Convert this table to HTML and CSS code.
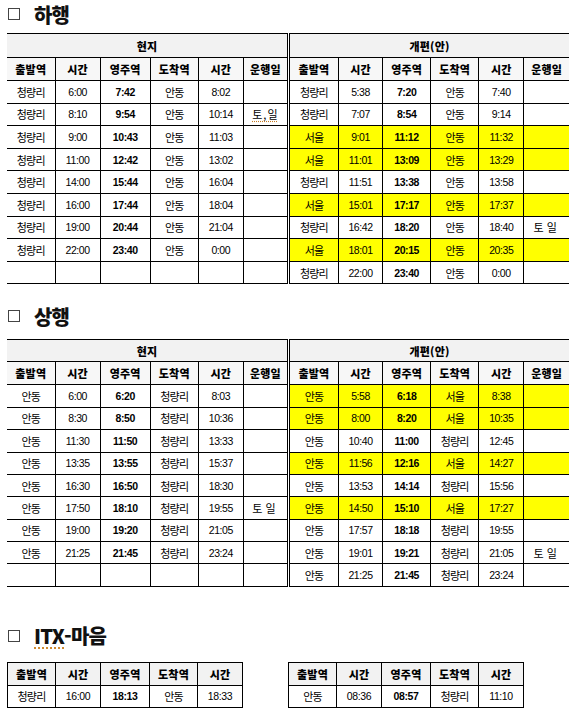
FILE: index.html
```html
<!DOCTYPE html>
<html lang="ko">
<head>
<meta charset="utf-8">
<link rel="stylesheet" href="styles.css">
</head>
<body>
<h2 class="title title-down"><span class="box"></span>하행</h2>
<table class="tt tt-down">
<colgroup><col class="c1"><col class="c2"><col class="c3"><col class="c4"><col class="c5"><col class="c6"><col class="c7"><col class="c8"><col class="c9"><col class="c10"><col class="c11"><col class="c12"></colgroup>
<tr class="h1"><th colspan="6">현지</th><th colspan="6" class="split">개편(안)</th></tr>
<tr class="h2"><th>출발역</th><th>시간</th><th>영주역</th><th>도착역</th><th>시간</th><th>운행일</th><th class="split">출발역</th><th>시간</th><th>영주역</th><th>도착역</th><th>시간</th><th>운행일</th></tr>
<tr><td>청량리</td><td>6:00</td><td>7:42</td><td>안동</td><td>8:02</td><td></td><td class="split">청량리</td><td>5:38</td><td>7:20</td><td>안동</td><td>7:40</td><td></td></tr>
<tr><td>청량리</td><td>8:10</td><td>9:54</td><td>안동</td><td>10:14</td><td><span class="spell">토,일</span></td><td class="split">청량리</td><td>7:07</td><td>8:54</td><td>안동</td><td>9:14</td><td></td></tr>
<tr class="hl"><td>청량리</td><td>9:00</td><td>10:43</td><td>안동</td><td>11:03</td><td></td><td class="split">서울</td><td>9:01</td><td>11:12</td><td>안동</td><td>11:32</td><td></td></tr>
<tr class="hl"><td>청량리</td><td>11:00</td><td>12:42</td><td>안동</td><td>13:02</td><td></td><td class="split">서울</td><td>11:01</td><td>13:09</td><td>안동</td><td>13:29</td><td></td></tr>
<tr><td>청량리</td><td>14:00</td><td>15:44</td><td>안동</td><td>16:04</td><td></td><td class="split">청량리</td><td>11:51</td><td>13:38</td><td>안동</td><td>13:58</td><td></td></tr>
<tr class="hl"><td>청량리</td><td>16:00</td><td>17:44</td><td>안동</td><td>18:04</td><td></td><td class="split">서울</td><td>15:01</td><td>17:17</td><td>안동</td><td>17:37</td><td></td></tr>
<tr><td>청량리</td><td>19:00</td><td>20:44</td><td>안동</td><td>21:04</td><td></td><td class="split">청량리</td><td>16:42</td><td>18:20</td><td>안동</td><td>18:40</td><td class="days">토일</td></tr>
<tr class="hl"><td>청량리</td><td>22:00</td><td>23:40</td><td>안동</td><td>0:00</td><td></td><td class="split">서울</td><td>18:01</td><td>20:15</td><td>안동</td><td>20:35</td><td></td></tr>
<tr><td></td><td></td><td></td><td></td><td></td><td></td><td class="split">청량리</td><td>22:00</td><td>23:40</td><td>안동</td><td>0:00</td><td></td></tr>
</table>

<h2 class="title title-up"><span class="box"></span>상행</h2>
<table class="tt tt-up">
<colgroup><col class="c1"><col class="c2"><col class="c3"><col class="c4"><col class="c5"><col class="c6"><col class="c7"><col class="c8"><col class="c9"><col class="c10"><col class="c11"><col class="c12"></colgroup>
<tr class="h1"><th colspan="6">현지</th><th colspan="6" class="split">개편(안)</th></tr>
<tr class="h2"><th>출발역</th><th>시간</th><th>영주역</th><th>도착역</th><th>시간</th><th>운행일</th><th class="split">출발역</th><th>시간</th><th>영주역</th><th>도착역</th><th>시간</th><th>운행일</th></tr>
<tr class="hl"><td>안동</td><td>6:00</td><td>6:20</td><td>청량리</td><td>8:03</td><td></td><td class="split">안동</td><td>5:58</td><td>6:18</td><td>서울</td><td>8:38</td><td></td></tr>
<tr class="hl"><td>안동</td><td>8:30</td><td>8:50</td><td>청량리</td><td>10:36</td><td></td><td class="split">안동</td><td>8:00</td><td>8:20</td><td>서울</td><td>10:35</td><td></td></tr>
<tr><td>안동</td><td>11:30</td><td>11:50</td><td>청량리</td><td>13:33</td><td></td><td class="split">안동</td><td>10:40</td><td>11:00</td><td>청량리</td><td>12:45</td><td></td></tr>
<tr class="hl"><td>안동</td><td>13:35</td><td>13:55</td><td>청량리</td><td>15:37</td><td></td><td class="split">안동</td><td>11:56</td><td>12:16</td><td>서울</td><td>14:27</td><td></td></tr>
<tr><td>안동</td><td>16:30</td><td>16:50</td><td>청량리</td><td>18:30</td><td></td><td class="split">안동</td><td>13:53</td><td>14:14</td><td>청량리</td><td>15:56</td><td></td></tr>
<tr class="hl"><td>안동</td><td>17:50</td><td>18:10</td><td>청량리</td><td>19:55</td><td class="days">토일</td><td class="split">안동</td><td>14:50</td><td>15:10</td><td>서울</td><td>17:27</td><td></td></tr>
<tr><td>안동</td><td>19:00</td><td>19:20</td><td>청량리</td><td>21:05</td><td></td><td class="split">안동</td><td>17:57</td><td>18:18</td><td>청량리</td><td>19:55</td><td></td></tr>
<tr><td>안동</td><td>21:25</td><td>21:45</td><td>청량리</td><td>23:24</td><td></td><td class="split">안동</td><td>19:01</td><td>19:21</td><td>청량리</td><td>21:05</td><td class="days">토일</td></tr>
<tr><td></td><td></td><td></td><td></td><td></td><td></td><td class="split">안동</td><td>21:25</td><td>21:45</td><td>청량리</td><td>23:24</td><td></td></tr>
</table>

<h2 class="title title-itx"><span class="box"></span><span class="spell-itx">ITX</span>-마음</h2>
<div class="itx-row">
<table class="itx">
<colgroup><col class="i1"><col class="i2"><col class="i3"><col class="i4"><col class="i5"></colgroup>
<tr class="ih"><th>출발역</th><th>시간</th><th>영주역</th><th>도착역</th><th>시간</th></tr>
<tr><td>청량리</td><td>16:00</td><td>18:13</td><td>안동</td><td>18:33</td></tr>
</table>
<table class="itx">
<colgroup><col class="i1"><col class="i2"><col class="i3"><col class="i4"><col class="i5"></colgroup>
<tr class="ih"><th>출발역</th><th>시간</th><th>영주역</th><th>도착역</th><th>시간</th></tr>
<tr><td>안동</td><td>08:36</td><td>08:57</td><td>청량리</td><td>11:10</td></tr>
</table>
</div>
</body>
</html>
```

FILE: styles.css
```css
html, body {
  margin: 0;
  padding: 0;
  background: #fff;
}
body {
  padding: 0 8px 0 7px;
  font-family: "Liberation Sans", "Noto Sans CJK KR", sans-serif;
  color: #000;
}
.title {
  display: flex;
  align-items: center;
  height: 24px;
  margin: 0;
  font-family: "Noto Sans CJK KR", sans-serif;
  font-weight: 900;
  font-size: 20px;
  letter-spacing: -0.8px;
  color: #111;
}
.box {
  display: inline-block;
  width: 10px;
  height: 10px;
  border: 1px solid #444;
  margin: 0 14px 0 1px;
}
.title-down { margin-top: 2px; margin-bottom: 7px; }
.title-up { margin-top: 20px; margin-bottom: 11px; }
.title-itx { margin-top: 37px; margin-bottom: 14px; }
.spell-itx {
  text-decoration: underline dotted #d08a30;
  text-underline-offset: 3px;
}

.tt {
  border-collapse: collapse;
  table-layout: fixed;
  width: 562px;
}
.c1 { width: 48px; } .c2 { width: 45px; } .c3 { width: 50px; } .c4 { width: 48px; } .c5 { width: 45px; } .c6 { width: 45px; }
.c7 { width: 50px; } .c8 { width: 44px; } .c9 { width: 48px; } .c10 { width: 48px; } .c11 { width: 45px; } .c12 { width: 45px; }

.tt th, .tt td, .itx th, .itx td {
  border: 1px solid #000;
  padding: 0;
  text-align: center;
  white-space: nowrap;
  overflow: hidden;
}
.tt th:first-child, .tt td:first-child { border-left: none; }
.tt th:last-child, .tt td:last-child { border-right: none; }
.tt .split { border-left: 3px double #000; }

.tt th, .itx th {
  font-family: "Noto Sans CJK KR", sans-serif;
  font-weight: 900;
  font-size: 11px;
  letter-spacing: 0.2px;
}
.tt .h1 th { height: 23px; background: #f2f2f2; }
.tt .h2 th { height: 22px; background: #f7f7f7; }
.tt-up .h1 th { height: 21px; }
.tt td { height: 21.6px; }
.tt-up td { height: 21.4px; }

.tt td, .itx td {
  font-family: "Noto Sans CJK KR", sans-serif;
  font-size: 11px;
  letter-spacing: -0.8px;
}
.tt td:nth-child(6n+2), .tt td:nth-child(6n+3), .tt td:nth-child(6n+5),
.itx td:nth-child(2), .itx td:nth-child(3), .itx td:nth-child(5) {
  font-family: "Liberation Sans", sans-serif;
  font-size: 10.5px;
  letter-spacing: -0.4px;
}
.tt td:nth-child(6n+3), .itx td:nth-child(3) { font-weight: 700; }

.tt .hl td:nth-child(n+7) { background: #ffff00; }

.days { letter-spacing: 3px !important; }
.spell {
  letter-spacing: 1px;
  text-decoration: underline dotted #c87a20;
  text-underline-offset: 2px;
}

.itx-row {
  display: flex;
  gap: 45px;
}
.itx {
  border-collapse: collapse;
  table-layout: fixed;
  width: 235px;
}
.i1 { width: 48px; } .i2 { width: 45px; } .i3 { width: 49px; } .i4 { width: 48px; } .i5 { width: 45px; }
.itx .ih th { height: 22px; background: #f2f2f2; }
.itx td { height: 21px; }
```
